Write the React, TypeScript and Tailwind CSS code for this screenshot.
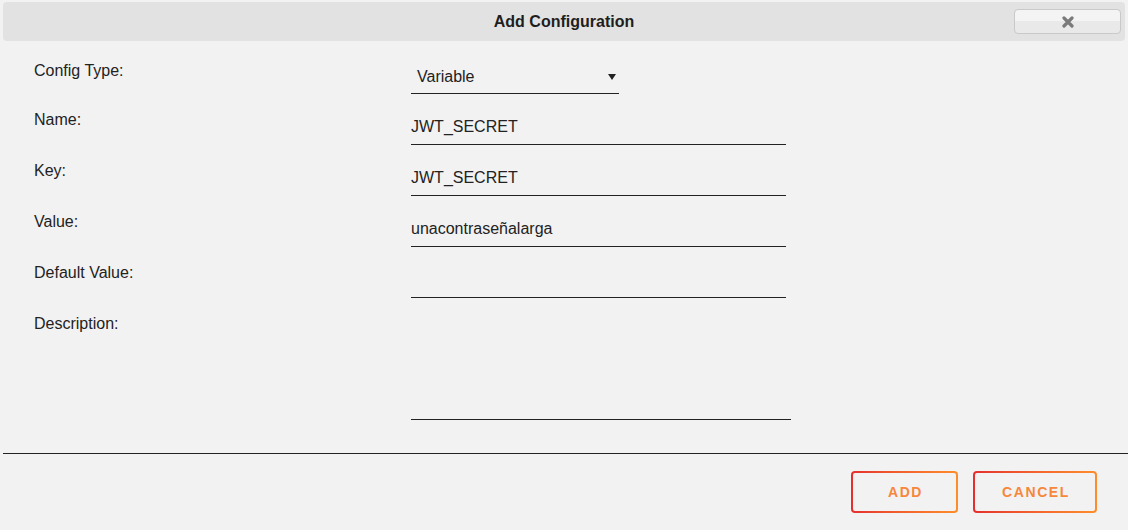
import React from 'react';

const font = { fontFamily: '"Liberation Sans", Arial, sans-serif' };

export default function App() {
  return (
    <div className="min-h-[530px] w-full bg-[#f2f2f2] text-[#222] pt-[2px]" style={font}>
      {/* TITLE BAR */}
      <div className="mx-[3px] grid h-[39px] grid-cols-[1fr_auto_1fr] items-center rounded-[4px] bg-[#e2e2e2]">
        <div />
        <h1 className="text-[16px] font-bold leading-5 text-[#1e1e1e]">Add Configuration</h1>
        <div className="flex justify-end pr-[4px]">
          <button className="flex h-[25px] w-[107px] items-center justify-center rounded-[4px] border border-[#c9c9c9] bg-gradient-to-b from-[#f4f4f4] from-50% to-[#e9e9e9] to-50%">
            <svg width="12" height="12" viewBox="0 0 12 12">
              <path d="M2 2 L10 10 M10 2 L2 10" stroke="#7a7a7a" strokeWidth="3.2" strokeLinecap="round" />
            </svg>
          </button>
        </div>
      </div>

      {/* FORM */}
      <div className="flex flex-col gap-[15px] pl-[34px] pt-[19px]">
        <div className="grid grid-cols-[377px_1fr]">
          <label className="pt-[1px] text-[16px] leading-5">Config Type:</label>
          <div className="flex h-[34px] w-[208px] items-center justify-between border-b border-[#222] pl-[6px] pr-[3px]">
            <span className="text-[16px]">Variable</span>
            <svg width="8" height="6" viewBox="0 0 8 6">
              <path d="M0 0 H8 L4 6 Z" fill="#222" />
            </svg>
          </div>
        </div>
        <Field label="Name:" value="JWT_SECRET" />
        <Field label="Key:" value="JWT_SECRET" />
        <Field label="Value:" value="unacontraseñalarga" />
        <Field label="Default Value:" value="" />
        <div className="grid grid-cols-[377px_1fr]">
          <label className="pt-[1px] text-[16px] leading-5">Description:</label>
          <textarea
            className="h-[107px] w-[380px] resize-none border-b border-[#222] bg-transparent text-[16px] outline-none"
            style={font}
            defaultValue=""
          />
        </div>
      </div>

      {/* FOOTER */}
      <div className="ml-[3px] mt-[33px] border-t border-[#222]" />
      <div className="flex justify-end gap-[15px] pr-[31px] pt-[17px]">
        <GradientButton width="w-[107px]">ADD</GradientButton>
        <GradientButton width="w-[124px]">CANCEL</GradientButton>
      </div>
    </div>
  );
}

function Field({ label, value }: { label: string; value: string }) {
  return (
    <div className="grid grid-cols-[377px_1fr]">
      <label className="pt-[1px] text-[16px] leading-5">{label}</label>
      <input
        className="h-[36px] w-[375px] border-b border-[#222] bg-transparent px-0 text-[16px] text-[#222] outline-none"
        style={font}
        defaultValue={value}
      />
    </div>
  );
}

function GradientButton({ children, width }: { children: React.ReactNode; width: string }) {
  return (
    <button className={`${width} h-[42px] rounded-[4px] bg-gradient-to-r from-[#e52d2d] to-[#ff8d2b] p-[2px]`}>
      <span className="flex h-full w-full items-center justify-center rounded-[2px] bg-[#f2f2f2] pl-[2px] text-[14px] font-bold tracking-[1.6px] text-[#f7873a]">
        {children}
      </span>
    </button>
  );
}
